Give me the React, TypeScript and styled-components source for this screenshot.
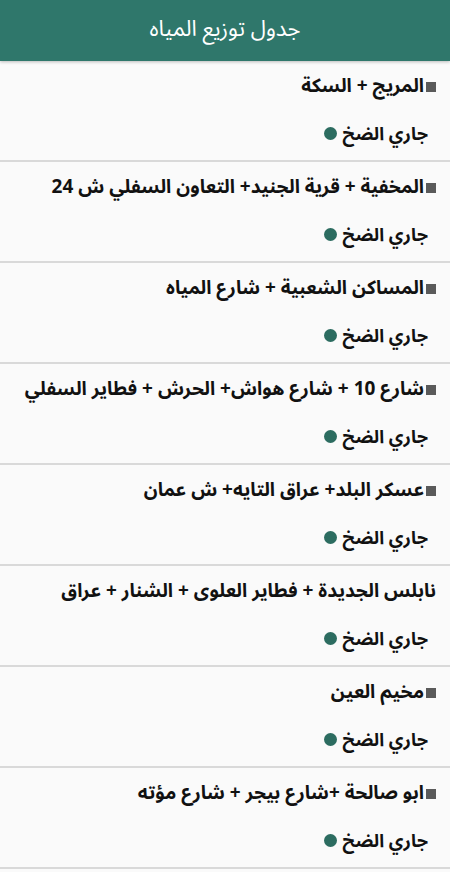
import React from "react";
import styled, { createGlobalStyle } from "styled-components";

const Global = createGlobalStyle`
  html, body { margin: 0; padding: 0; background: #fafafa; }
  body { font-family: "Noto Sans Arabic", "DejaVu Sans", sans-serif; }
`;

const Page = styled.div`
  width: 450px;
  min-height: 872px;
  background: #fafafa;
  direction: rtl;
`;

const Header = styled.header`
  height: 61px;
  background: #2f776b;
  display: flex;
  align-items: center;
  justify-content: center;
  box-shadow: 0 1px 3px rgba(0, 0, 0, 0.25);
  position: relative;
  z-index: 1;
`;

const Title = styled.h1`
  margin: 0;
  color: #ffffff;
  font-family: "Noto Sans Arabic", "DejaVu Sans", sans-serif;
  font-weight: 400;
  font-size: 22px;
  line-height: 1;
  padding-bottom: 3px;
`;

const List = styled.ul`
  list-style: none;
  margin: 0;
  padding: 0;
`;

const Row = styled.li`
  height: 99px;
  border-bottom: 2px solid #d9d9d9;
  display: flex;
  flex-direction: column;
  box-sizing: content-box;
`;

const Name = styled.div`
  height: 51px;
  display: flex;
  align-items: center;
  padding-right: 14px;
  font-weight: 700;
  font-size: 19px;
  line-height: 1;
  color: #111;
  white-space: nowrap;
`;

const Square = styled.span`
  display: inline-block;
  width: 10px;
  height: 10px;
  background: #5a5a5a;
  margin-left: 2px;
  flex: none;
`;

const Status = styled.div`
  height: 43px;
  display: flex;
  align-items: center;
  gap: 6px;
  padding-right: 22px;
  font-weight: 700;
  font-size: 18px;
  line-height: 1;
  color: #111;
`;

const Dot = styled.span`
  width: 13px;
  height: 13px;
  border-radius: 50%;
  background: #2c6c60;
  flex: none;
`;

const rows: { name: string; square: boolean }[] = [
  { name: "المريج + السكة", square: true },
  { name: "المخفية + قرية الجنيد+ التعاون السفلي ش 24", square: true },
  { name: "المساكن الشعبية + شارع المياه", square: true },
  { name: "شارع 10 + شارع هواش+ الحرش + فطاير السفلي", square: true },
  { name: "عسكر البلد+ عراق التايه+ ش عمان", square: true },
  { name: "نابلس الجديدة + فطاير العلوى + الشنار + عراق", square: false },
  { name: "مخيم العين", square: true },
  { name: "ابو صالحة +شارع بيجر + شارع مؤته", square: true },
];

export default function App() {
  return (
    <Page>
      <Global />
      <Header>
        <Title>جدول توزيع المياه</Title>
      </Header>
      <List>
        {rows.map((r, i) => (
          <Row key={i}>
            <Name>
              {r.square && <Square />}
              <span>{r.name}</span>
            </Name>
            <Status>
              <span>جاري الضخ</span>
              <Dot />
            </Status>
          </Row>
        ))}
      </List>
    </Page>
  );
}
